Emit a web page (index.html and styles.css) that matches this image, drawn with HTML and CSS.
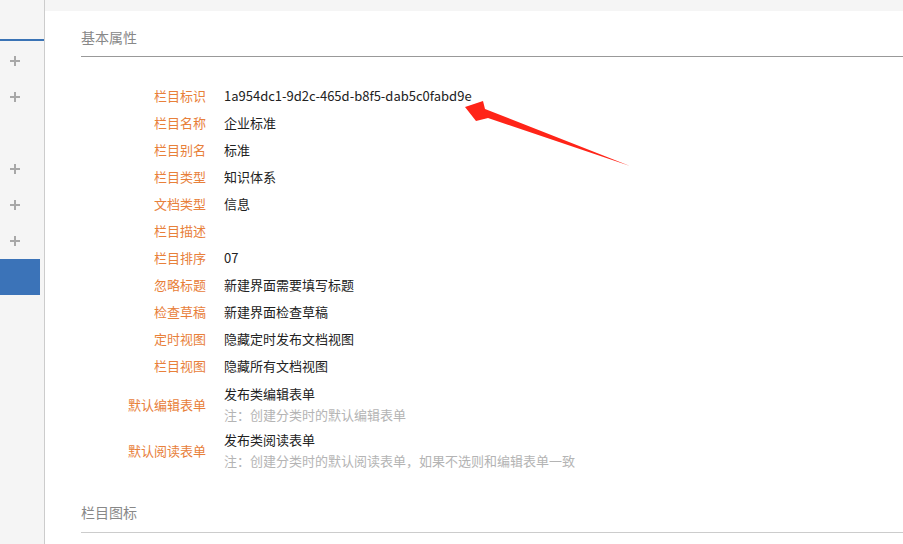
FILE: index.html
```html
<!DOCTYPE html>
<html>
<head lang="zh-CN">
    <meta charset="UTF-8">
    <title>栏目属性</title>
    <link rel="stylesheet" href="styles.css">
</head>
<body>
<div class="page">
    <div class="side">
        <div class="side-top"></div>
        <ul class="side-menu">
            <li><span class="plus"></span></li>
            <li><span class="plus"></span></li>
            <li></li>
            <li><span class="plus"></span></li>
            <li><span class="plus"></span></li>
            <li><span class="plus"></span></li>
            <li class="active"></li>
        </ul>
    </div>
    <div class="main">
        <div class="main-strip"></div>
        <div class="panel">
            <div class="sec-title">基本属性</div>
            <div class="form">
                <div class="form-row"><label>栏目标识</label><div class="val">1a954dc1-9d2c-465d-b8f5-dab5c0fabd9e</div></div>
                <div class="form-row"><label>栏目名称</label><div class="val">企业标准</div></div>
                <div class="form-row"><label>栏目别名</label><div class="val">标准</div></div>
                <div class="form-row"><label>栏目类型</label><div class="val">知识体系</div></div>
                <div class="form-row"><label>文档类型</label><div class="val">信息</div></div>
                <div class="form-row"><label>栏目描述</label><div class="val"></div></div>
                <div class="form-row"><label>栏目排序</label><div class="val">07</div></div>
                <div class="form-row"><label>忽略标题</label><div class="val">新建界面需要填写标题</div></div>
                <div class="form-row"><label>检查草稿</label><div class="val">新建界面检查草稿</div></div>
                <div class="form-row"><label>定时视图</label><div class="val">隐藏定时发布文档视图</div></div>
                <div class="form-row"><label>栏目视图</label><div class="val">隐藏所有文档视图</div></div>
                <div class="form-row multi">
                    <label>默认编辑表单</label>
                    <div class="val">
                        <p>发布类编辑表单</p>
                        <p class="note">注：创建分类时的默认编辑表单</p>
                    </div>
                </div>
                <div class="form-row multi">
                    <label>默认阅读表单</label>
                    <div class="val">
                        <p>发布类阅读表单</p>
                        <p class="note">注：创建分类时的默认阅读表单，如果不选则和编辑表单一致</p>
                    </div>
                </div>
            </div>
            <div class="sec-title sec-light">栏目图标</div>
        </div>
    </div>
</div>
<!-- 标注箭头 -->
<svg class="mark-arrow" width="903" height="544" viewBox="0 0 903 544">
    <polygon points="465,107 483,101 485,109 630,166 488,118 476,121" fill="#ff2418"/>
</svg>
</body>
</html>
```

FILE: styles.css
```css
html, body {
    margin: 0;
    padding: 0;
}
ul, li, p, div, label {
    margin: 0;
    padding: 0;
}
body {
    font-family: "Noto Sans CJK SC", "Noto Sans", sans-serif;
    font-size: 13px;
    color: #222;
    background: #ffffff;
    width: 903px;
    height: 544px;
    overflow: hidden;
}
.page {
    display: flex;
    height: 544px;
}
.side {
    width: 44px;
    background: #f5f5f5;
    border-right: 1px solid #cccccc;
}
.side-top {
    height: 39px;
    border-bottom: 2px solid #3a73b5;
    margin-bottom: 2px;
}
.side-menu {
    list-style: none;
}
.side-menu li {
    height: 36px;
    width: 40px;
    display: flex;
    align-items: center;
    padding-left: 10px;
    box-sizing: border-box;
}
.side-menu li.active {
    background: #3b73b8;
}
.plus {
    position: relative;
    width: 10px;
    height: 10px;
}
.plus:before, .plus:after {
    content: "";
    position: absolute;
    background: #a8a8a8;
}
.plus:before {
    left: 0;
    top: 4px;
    width: 10px;
    height: 2px;
}
.plus:after {
    left: 4px;
    top: 0;
    width: 2px;
    height: 10px;
}
.main {
    flex: 1;
    display: flex;
    flex-direction: column;
}
.main-strip {
    height: 11px;
    background: #f5f5f5;
}
.panel {
    flex: 1;
    background: #ffffff;
    padding-left: 36px;
}
.sec-title {
    font-size: 14px;
    color: #888888;
    padding-top: 16px;
    line-height: 20px;
    padding-bottom: 9px;
    border-bottom: 1px solid #999999;
}
.sec-light {
    margin-top: 15px;
    padding-bottom: 10px;
    border-bottom-color: #cccccc;
}
.form {
    margin-top: 25px;
}
.form-row {
    display: flex;
    align-items: center;
    height: 27px;
    line-height: 27px;
}
.form-row label {
    width: 125px;
    margin-right: 18px;
    text-align: right;
    color: #e8803a;
    flex-shrink: 0;
}
.form-row.multi {
    height: 42px;
    margin-top: 4px;
    line-height: 21px;
}
.note {
    color: #b4b4b4;
}
.mark-arrow {
    position: absolute;
    left: 0;
    top: 0;
    pointer-events: none;
}
```
